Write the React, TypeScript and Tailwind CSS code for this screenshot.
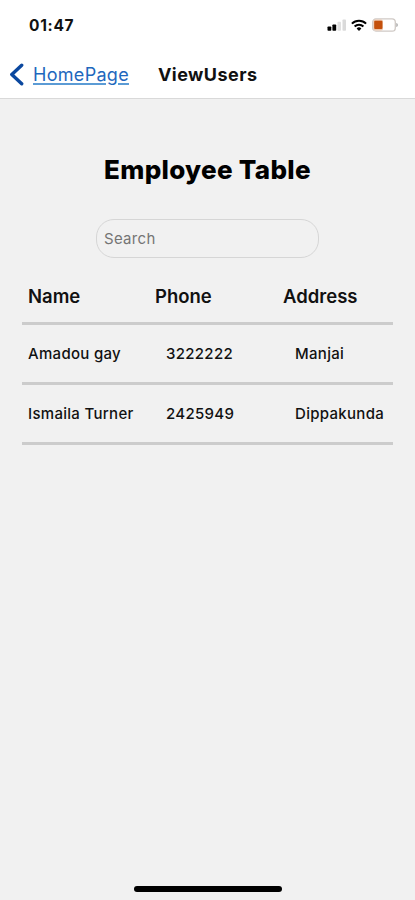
const employees = [
  { name: "Amadou gay", phone: "3222222", address: "Manjai" },
  { name: "Ismaila Turner", phone: "2425949", address: "Dippakunda" },
]

function StatusBar() {
  return (
    <div className="flex h-[50px] items-center justify-between pr-[17px] pl-[29px]">
      <span className="pt-[2px] text-[15.5px] font-bold tracking-[0.7px]">01:47</span>
      <div className="flex items-center">
        <svg width="20" height="12" viewBox="0 0 20 12" className="mr-[4px]">
          <rect x="0.5" y="7.5" width="3.8" height="4.2" rx="0.8" fill="#000" />
          <rect x="5.4" y="5.4" width="3.8" height="6.3" rx="0.8" fill="#000" />
          <rect x="10.5" y="2.8" width="3.5" height="8.9" rx="0.8" fill="#e0e0e0" />
          <rect x="15.5" y="0.4" width="3.5" height="11.3" rx="0.8" fill="#dadada" />
        </svg>
        <svg width="16" height="12" viewBox="0 0 16 12" className="mr-[5px]">
          <g fill="none" stroke="#000" strokeWidth="2">
            <path d="M0.9 4.6a10 10 0 0 1 14.2 0" />
            <path d="M3.6 7.5a6.2 6.2 0 0 1 8.8 0" />
          </g>
          <path d="M5.6 9.5a3.4 3.4 0 0 1 4.8 0L8 11.9z" fill="#000" />
        </svg>
        <svg width="26" height="14" viewBox="0 0 26 14">
          <rect x="0.7" y="0.9" width="22.6" height="12.2" rx="3.2" fill="#fff" stroke="#cfc9c5" strokeWidth="1.3" />
          <rect x="1.3" y="1.5" width="9.7" height="11" rx="2" fill="#ecc5ab" />
          <rect x="2.2" y="2.7" width="8.2" height="8.4" rx="1" fill="#c4500c" />
          <path d="M24.3 5v4c1-.4 1.5-1.1 1.5-2s-.5-1.6-1.5-2z" fill="#a8a8a8" />
        </svg>
      </div>
    </div>
  )
}

function NavBar() {
  return (
    <nav className="flex h-[48px] items-center pl-[9px] text-[18px]">
      <svg width="15" height="23" viewBox="0 0 15 23" className="mr-[9px]">
        <path d="M12.7 2.2 2.8 11.5l9.9 9.3" fill="none" stroke="#0b489f" strokeWidth="3.4" strokeLinecap="round" strokeLinejoin="round" />
      </svg>
      <a href="#" className="mr-[29px] tracking-[0.3px] text-[#1e67bd] underline decoration-[#5b9bd5] decoration-2 underline-offset-2">
        HomePage
      </a>
      <h1 className="font-bold tracking-[0.45px] text-[#111]">ViewUsers</h1>
    </nav>
  )
}

export default function App() {
  return (
    <div className="flex h-[900px] w-[415px] flex-col bg-[#f1f1f1] font-['Inter','Liberation_Sans',sans-serif] text-[#111]">
      <header className="h-[99px] border-b border-[#d9d9d9] bg-white">
        <StatusBar />
        <NavBar />
      </header>
      <main className="flex flex-1 flex-col items-center pt-[53px]">
        <h2 className="text-[26px] leading-[36px] font-extrabold tracking-[0.3px] text-black">Employee Table</h2>
        <input
          type="text"
          placeholder="Search"
          className="mt-[31px] h-[39px] w-[223px] rounded-[18px] border border-[#d6d6d6] px-[7px] text-[15px] tracking-[0.3px] outline-none placeholder:text-[#757575]"
        />
        <table className="mt-[8px] w-[371px] table-fixed border-collapse text-left">
          <thead>
            <tr className="h-[57px] border-b-3 border-[#cccccc] text-[18.5px]">
              <th className="w-[127px] pt-[7px] pl-[6px] font-semibold">Name</th>
              <th className="w-[127px] pt-[7px] pl-[6px] font-semibold">Phone</th>
              <th className="pt-[7px] pl-[7px] font-semibold">Address</th>
            </tr>
          </thead>
          <tbody>
            {employees.map((employee) => (
              <tr key={employee.name} className="h-[60px] border-b-3 border-[#cccccc] text-[15px] font-medium tracking-[0.3px]">
                <td className="pt-[3px] pl-[6px] whitespace-nowrap">{employee.name}</td>
                <td className="pt-[3px] pl-[17px]">{employee.phone}</td>
                <td className="pt-[3px] pl-[19px]">{employee.address}</td>
              </tr>
            ))}
          </tbody>
        </table>
      </main>
      <div className="mx-auto mb-[8px] h-[6px] w-[148px] rounded-full bg-black" />
    </div>
  )
}
